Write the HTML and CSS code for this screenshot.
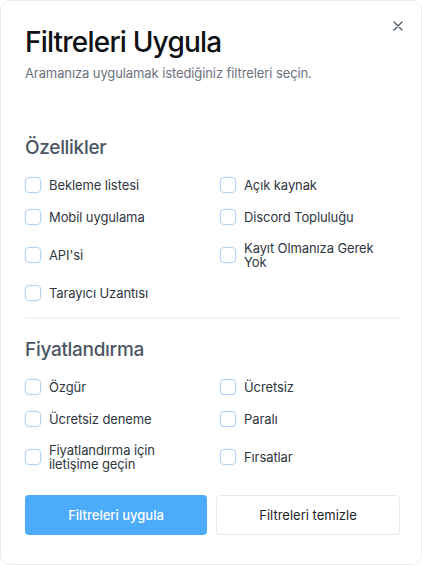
FILE: index.html
```html
<!DOCTYPE html>
<html lang="tr">
<head>
    <meta charset="utf-8" />
    <title>Filtreleri Uygula</title>
    <link rel="stylesheet" href="styles.css">
</head>
<body>
    <div class="modal">
        <button class="close" type="button" aria-label="Kapat">
            <svg width="10" height="10" viewBox="0 0 10 10">
                <path d="M1 1L9 9M9 1L1 9" stroke="#4b5563" stroke-width="1.3" stroke-linecap="round" />
            </svg>
        </button>

        <div class="header">
            <h1 class="title">Filtreleri Uygula</h1>
            <p class="subtitle">Aramanıza uygulamak istediğiniz filtreleri seçin.</p>
        </div>

        <div class="section first">
            <h2 class="section-title">Özellikler</h2>
            <div class="options">
                <label class="option"><span class="box"></span><span class="text">Bekleme listesi</span></label>
                <label class="option"><span class="box"></span><span class="text">Açık kaynak</span></label>
                <label class="option"><span class="box"></span><span class="text">Mobil uygulama</span></label>
                <label class="option"><span class="box"></span><span class="text">Discord Topluluğu</span></label>
                <label class="option"><span class="box"></span><span class="text">API'si</span></label>
                <label class="option"><span class="box"></span><span class="text">Kayıt Olmanıza Gerek Yok</span></label>
                <label class="option"><span class="box"></span><span class="text">Tarayıcı Uzantısı</span></label>
            </div>
        </div>

        <div class="divider"></div>

        <div class="section">
            <h2 class="section-title">Fiyatlandırma</h2>
            <div class="options">
                <label class="option"><span class="box"></span><span class="text">Özgür</span></label>
                <label class="option"><span class="box"></span><span class="text">Ücretsiz</span></label>
                <label class="option"><span class="box"></span><span class="text">Ücretsiz deneme</span></label>
                <label class="option"><span class="box"></span><span class="text">Paralı</span></label>
                <label class="option"><span class="box"></span><span class="text">Fiyatlandırma için iletişime geçin</span></label>
                <label class="option"><span class="box"></span><span class="text">Fırsatlar</span></label>
            </div>
        </div>

        <div class="actions">
            <button class="btn primary" type="button">Filtreleri uygula</button>
            <button class="btn secondary" type="button">Filtreleri temizle</button>
        </div>
    </div>
</body>
</html>
```

FILE: styles.css
```css
* {
    box-sizing: border-box;
}

body {
    margin: 0;
    background-color: #ffffff;
    font-family: Inter, "Liberation Sans", sans-serif;
}

.modal {
    position: relative;
    width: 422px;
    height: 565px;
    border: 1px solid #ececec;
    border-radius: 10px;
    background-color: #ffffff;
    padding: 23px 21px 0 24px;
}

.close {
    position: absolute;
    top: 17px;
    right: 17px;
    width: 12px;
    height: 12px;
    padding: 1px;
    border: none;
    background: none;
    cursor: pointer;
}

.title {
    margin: 0;
    font-size: 28px;
    line-height: 36px;
    font-weight: 500;
    letter-spacing: -0.8px;
    color: #0f1115;
}

.subtitle {
    margin: 3px 0 0 0;
    font-size: 13px;
    line-height: 20px;
    letter-spacing: -0.1px;
    color: #6b7280;
}

.section.first {
    margin-top: 51px;
}

.section {
    margin-top: 17px;
}

.section-title {
    margin: 0;
    font-size: 19px;
    line-height: 28px;
    font-weight: 500;
    letter-spacing: -0.3px;
    color: #4b5563;
}

.options {
    display: grid;
    grid-template-columns: 180px 180px;
    column-gap: 15px;
    row-gap: 16px;
    margin-top: 15px;
}

.option {
    display: flex;
    align-items: center;
    min-height: 16px;
    font-size: 13px;
    line-height: 14px;
    color: #2f3640;
}

.box {
    flex: none;
    width: 16px;
    height: 16px;
    border: 1.5px solid #b3d5f3;
    border-radius: 4px;
    margin-right: 8px;
    box-shadow: 0 0 0 0.5px #e3effa;
}

.text {
    padding-right: 10px;
    letter-spacing: -0.1px;
}

.divider {
    height: 2px;
    margin-top: 16px;
    background-color: #f2f3f5;
}

.actions {
    display: flex;
    gap: 9px;
    margin-top: 24px;
}

.btn {
    flex: 1;
    height: 40px;
    border-radius: 4px;
    font-family: Inter, "Liberation Sans", sans-serif;
    font-size: 13px;
    cursor: pointer;
}

.primary {
    border: none;
    background-color: #4dabfc;
    color: #ffffff;
    font-weight: 500;
}

.secondary {
    border: 1px solid #e6e8eb;
    background-color: #ffffff;
    color: #1f2329;
}
```
